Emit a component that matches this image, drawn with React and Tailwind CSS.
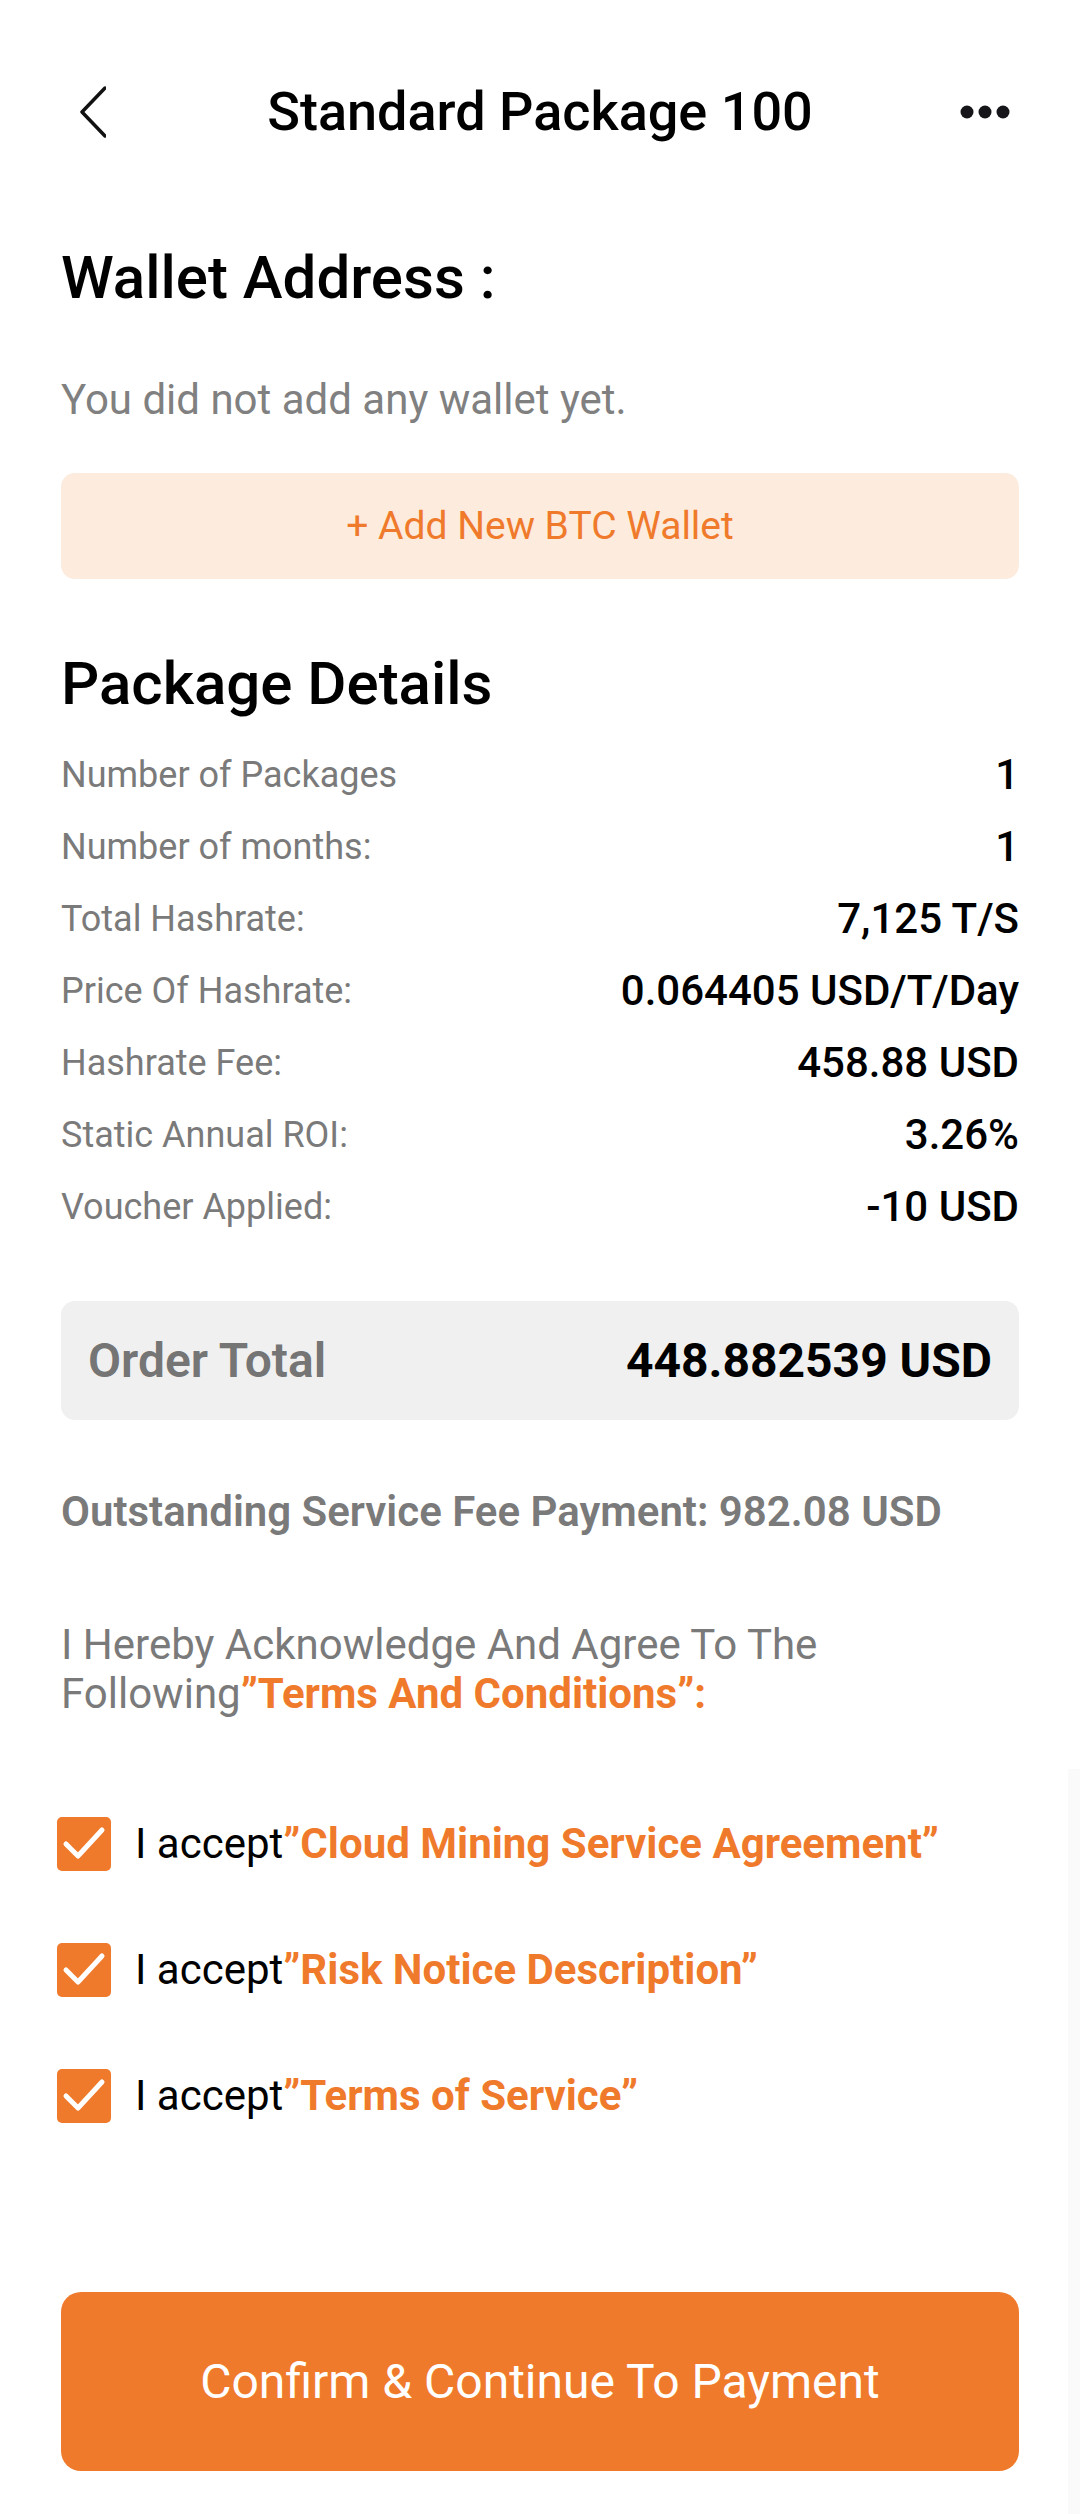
import React from 'react';

const details = [
  { label: 'Number of Packages', value: '1' },
  { label: 'Number of months:', value: '1' },
  { label: 'Total Hashrate:', value: '7,125 T/S' },
  { label: 'Price Of Hashrate:', value: '0.064405 USD/T/Day' },
  { label: 'Hashrate Fee:', value: '458.88 USD' },
  { label: 'Static Annual ROI:', value: '3.26%' },
  { label: 'Voucher Applied:', value: '-10 USD' },
];

const agreements = [
  'Cloud Mining Service Agreement',
  'Risk Notice Description',
  'Terms of Service',
];

function CheckBox() {
  return (
    <div className="flex h-[54px] w-[54px] shrink-0 items-center justify-center rounded-[5px] bg-[#f07a2b]">
      <svg width="54" height="54" viewBox="0 0 54 54" fill="none">
        <path d="M9 27 L21 39 L45 13" stroke="#fff" strokeWidth="5" strokeLinecap="round" strokeLinejoin="round" />
      </svg>
    </div>
  );
}

export default function App() {
  return (
    <div
      className="relative min-h-[2514px] w-[1080px] bg-white px-[61px] text-black"
      style={{ fontFamily: 'Roboto, "Noto Sans", Arial, sans-serif' }}
    >
      {/* Header */}
      <div className="mt-[72px] grid h-[80px] grid-cols-[1fr_auto_1fr] items-center">
        <svg width="44" height="60" viewBox="0 0 44 60" fill="none" className="ml-[1px] justify-self-start">
          <path d="M43 6 L20 30 L43 54" stroke="#111" strokeWidth="3.5" strokeLinecap="round" strokeLinejoin="round" />
        </svg>
        <h1 className="text-[54px] font-medium leading-none">Standard Package 100</h1>
        <svg width="60" height="20" viewBox="0 0 60 20" fill="#16161a" className="justify-self-end">
          <circle cx="8" cy="10" r="6.5" />
          <circle cx="26" cy="10" r="6.5" />
          <circle cx="44" cy="10" r="6.5" />
        </svg>
      </div>

      {/* Wallet */}
      <h2 className="mt-[91px] text-[60px] font-medium leading-[70px]">Wallet Address :</h2>
      <p className="mt-[62px] text-[42px] leading-[50px] text-[#808080]">You did not add any wallet yet.</p>
      <button className="mt-[48px] flex h-[106px] w-full items-center justify-center rounded-[14px] bg-[#fdebdd] text-[39px] leading-none text-[#f07a2b]">
        + Add New BTC Wallet
      </button>

      {/* Package details */}
      <h2 className="mt-[70px] text-[60px] font-medium leading-[70px]">Package Details</h2>
      <div className="mt-[20px]">
        {details.map((d) => (
          <div key={d.label} className="flex h-[72px] items-center justify-between">
            <span className="text-[36px] leading-none text-[#7a7a7a]">{d.label}</span>
            <span className="text-[42px] font-medium leading-none">{d.value}</span>
          </div>
        ))}
      </div>

      {/* Order total */}
      <div className="mt-[58px] flex h-[119px] items-center justify-between rounded-[14px] bg-[#f0f0f0] px-[27px]">
        <span className="text-[48px] font-semibold leading-none text-[#757575]">Order Total</span>
        <span className="text-[48px] font-bold leading-none">448.882539 USD</span>
      </div>

      <p className="mt-[67px] text-[42px] font-semibold leading-[50px] text-[#7a7a7a]">
        Outstanding Service Fee Payment: 982.08 USD
      </p>

      <p className="mt-[83px] text-[42px] leading-[49px] text-[#7a7a7a]">
        I Hereby Acknowledge And Agree To The Following
        <span className="font-bold text-[#f07a2b]">”Terms And Conditions”:</span>
      </p>

      {/* Agreements */}
      <div className="-ml-[4px] mt-[99px] flex flex-col gap-[72px]">
        {agreements.map((a) => (
          <div key={a} className="flex h-[54px] items-center gap-[24px]">
            <CheckBox />
            <span className="text-[42px] leading-none">
              I accept<span className="font-bold text-[#f07a2b]">”{a}”</span>
            </span>
          </div>
        ))}
      </div>

      <button className="mt-[169px] flex h-[179px] w-full items-center justify-center rounded-[20px] bg-[#f07a2b] text-[48px] leading-none text-white">
        Confirm &amp; Continue To Payment
      </button>

      {/* faint scroll strip */}
      <div className="absolute right-0 top-[1697px] h-[817px] w-[12px] bg-[#fafafa]" />
    </div>
  );
}
